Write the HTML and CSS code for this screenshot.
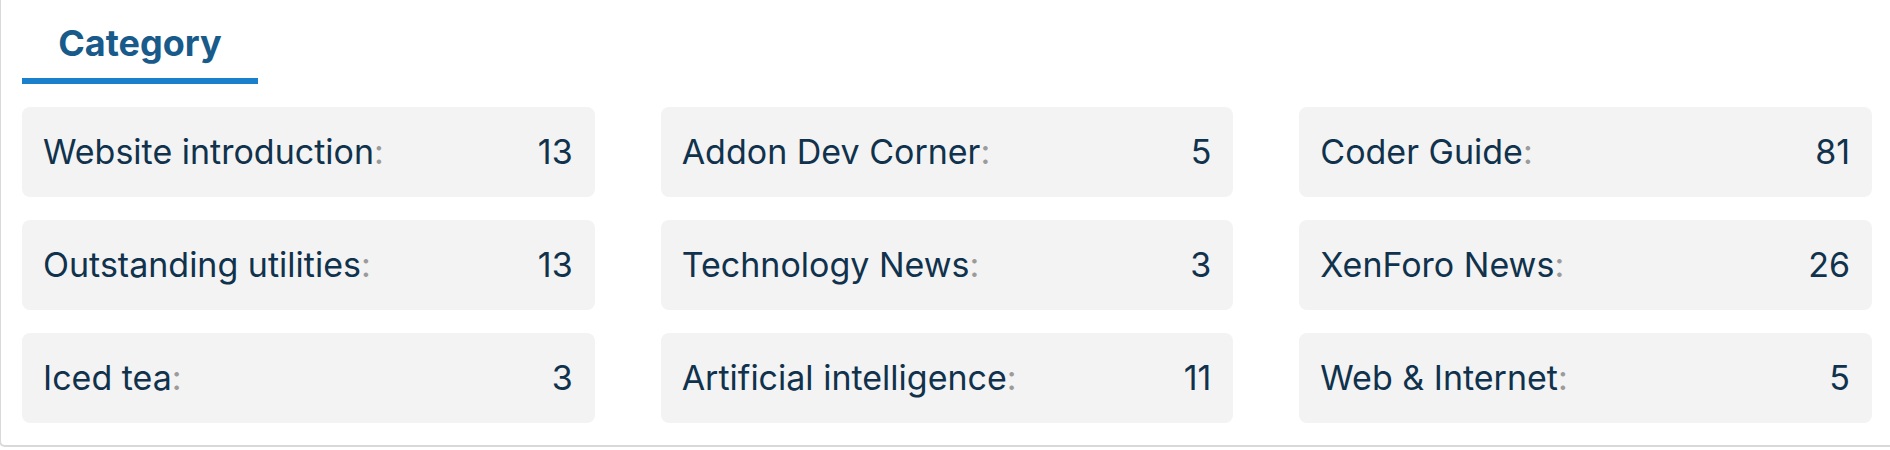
FILE: index.html
```html
<!DOCTYPE html>
<html lang="en">
<head>
<meta charset="utf-8">
<title>Category</title>
<link rel="stylesheet" href="styles.css">
</head>
<body>
<section class="block">
  <div class="tabs">
    <h2 class="tab tab--active">Category</h2>
  </div>
  <ul class="cats">
    <li class="cat"><span class="cat__name">Website introduction<span class="cat__colon">:</span></span><span class="cat__count">13</span></li>
    <li class="cat"><span class="cat__name">Addon Dev Corner<span class="cat__colon">:</span></span><span class="cat__count">5</span></li>
    <li class="cat"><span class="cat__name">Coder Guide<span class="cat__colon">:</span></span><span class="cat__count">81</span></li>
    <li class="cat"><span class="cat__name">Outstanding utilities<span class="cat__colon">:</span></span><span class="cat__count">13</span></li>
    <li class="cat"><span class="cat__name">Technology News<span class="cat__colon">:</span></span><span class="cat__count">3</span></li>
    <li class="cat"><span class="cat__name">XenForo News<span class="cat__colon">:</span></span><span class="cat__count">26</span></li>
    <li class="cat"><span class="cat__name">Iced tea<span class="cat__colon">:</span></span><span class="cat__count">3</span></li>
    <li class="cat"><span class="cat__name">Artificial intelligence<span class="cat__colon">:</span></span><span class="cat__count">11</span></li>
    <li class="cat"><span class="cat__name">Web &amp; Internet<span class="cat__colon">:</span></span><span class="cat__count">5</span></li>
  </ul>
</section>
</body>
</html>
```

FILE: styles.css
```css
html, body {
  margin: 0;
  padding: 0;
  background: #ffffff;
  overflow: hidden;
}

body {
  font-family: Inter, "Noto Sans", sans-serif;
  color: #10324c;
}

.block {
  width: 1920px;
  box-sizing: border-box;
  padding: 0 0 22px 21px;
  border-left: 2px solid #d9d9d9;
  border-bottom: 2px solid #d9d9d9;
  border-bottom-left-radius: 6px;
  margin-left: -1px;
}

.tabs {
  display: flex;
}

.tab {
  margin: 0;
  width: 236px;
  box-sizing: border-box;
  padding: 22px 0 14px;
  text-align: center;
  font-size: 36px;
  line-height: 42px;
  font-weight: 700;
  color: #185a8a;
  border-bottom: 6px solid #1b80cc;
}

.cats {
  list-style: none;
  margin: 23px 0 0;
  padding: 0;
  width: 1850px;
  display: grid;
  grid-template-columns: repeat(3, 1fr);
  column-gap: 66px;
  row-gap: 23px;
}

.cat {
  height: 90px;
  box-sizing: border-box;
  padding: 0 22px 0 21px;
  display: flex;
  align-items: center;
  justify-content: space-between;
  background: #f3f3f3;
  border-radius: 8px;
  font-size: 34px;
  line-height: 40px;
}

.cat__colon {
  color: #9b9b9b;
}

.cat__count {
  color: #10324c;
}
```
